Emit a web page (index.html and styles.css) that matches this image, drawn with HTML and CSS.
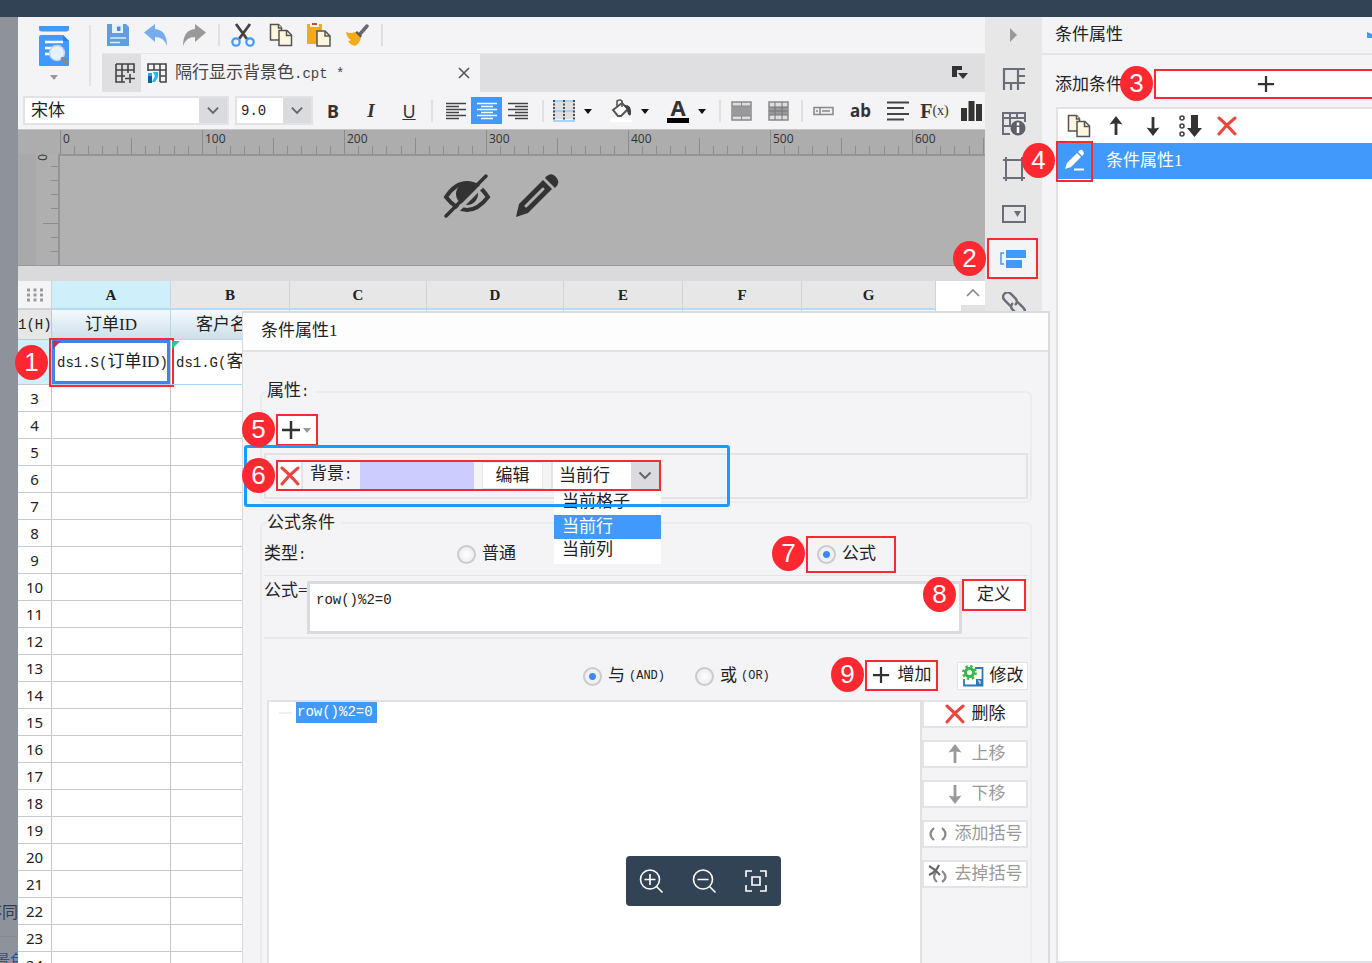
FILE: index.html
```html
<!DOCTYPE html>
<html lang="zh-CN">
<head>
<meta charset="utf-8">
<title>条件属性</title>
<link rel="stylesheet" href="styles.css">
</head>
<body>
<svg class="defs" aria-hidden="true">
  <symbol id="copy" viewBox="0 0 24 24"><path d="M1.500 1.500h8l3 3v12.500h-11z" fill="#fff6e0" stroke="#555" stroke-width="1.500"/><path d="M9.500 1.500v3.500h3.500M10 7.500h8l4.500 4.500v10.500h-12.500z" fill="#fff6e0" stroke="#555" stroke-width="1.500"/><path d="M17.500 7.500v5h5" fill="none" stroke="#555" stroke-width="1.500"/></symbol>
  <symbol id="cross" viewBox="0 0 20 20"><path d="M2 2Q9 8 18 18M18 2Q9 9 2 18" fill="none" stroke="#e8463e" stroke-width="3" stroke-linecap="round"/></symbol>
  <symbol id="plus" viewBox="0 0 20 20"><path d="M10 1v18M1 10h18" stroke="#333" stroke-width="2.500"/></symbol>
  <symbol id="up" viewBox="0 0 20 20"><path d="M10 19V5" stroke="currentColor" stroke-width="2.800"/><path d="M10 0l6.500 8.500q-6.500-2-13 0z" fill="currentColor"/></symbol>
  <symbol id="down" viewBox="0 0 20 20"><path d="M10 1v14" stroke="currentColor" stroke-width="2.800"/><path d="M10 20l6.500-8.500q-6.500 2-13 0z" fill="currentColor"/></symbol>
  <symbol id="caret" viewBox="0 0 12 12"><path d="M2 4h8l-4 5z" fill="currentColor"/></symbol>
  <symbol id="chev" viewBox="0 0 14 14"><path d="M1.500 4l5.500 5.500 5.500-5.500" fill="none" stroke="#666" stroke-width="2"/></symbol>
</svg>

<header class="viewer-bar"></header>
<div class="page">
  <aside class="gutter"><span class="gutter-text">不同</span><a class="gutter-link" href="#">景色</a></aside>

  <main class="workspace">
    <div class="top">
      <button class="preview" aria-label="预览">
        <svg width="32" height="42" viewBox="0 0 32 42"><path d="M1 1h30v3q0 2.500-3 2.500h-24q-3 0-3-2.500z" fill="#419afb"/><path d="M3 10h22l6 6v24q0 1-1 1H2q-1 0-1-1V12q0-2 2-2z" fill="#419afb"/><path d="M25 10l6 6h-6z" fill="#2d7fe0"/><path d="M7 17h18M7 23h8M7 29h6" stroke="#fff" stroke-width="2.500"/><circle cx="19" cy="28" r="7.500" fill="#e6f1fb" stroke="#c5d3df" stroke-width="1.500"/><path d="M24.500 33.500l4.500 4.500" stroke="#888" stroke-width="3.500" stroke-linecap="round"/></svg>
        <svg class="grey" width="12" height="12"><use href="#caret"/></svg>
      </button>
      <div class="top-right">
        <div class="quick">
          <button aria-label="保存"><svg width="24" height="24" viewBox="0 0 24 24"><path d="M1 1h19l3 3v19H1z" fill="#5f9fe0"/><path d="M6 1h11v9H6z" fill="#e8f2fc"/><path d="M11 3.500h3.500v4.500H11z" fill="#4a8ed6"/><path d="M4 15h16M4 19.500h10" stroke="#dcebfa" stroke-width="1.500"/></svg></button>
          <button aria-label="撤销"><svg width="24" height="24" viewBox="0 0 24 24"><path d="M0 9.500L11 1v5q12 1 12 17-3-9-12-9v5z" fill="#75aeee"/></svg></button>
          <button aria-label="重做"><svg width="24" height="24" viewBox="0 0 24 24"><path d="M24 9.500L13 1v5Q1 7 1 23q3-9 12-9v5z" fill="#999"/></svg></button>
          <i class="sep"></i>
          <button aria-label="剪切"><svg width="24" height="24" viewBox="0 0 24 24"><path d="M5 1l11 15M19 1L8 16" stroke="#444" stroke-width="2.800"/><circle cx="5" cy="19" r="3.700" fill="none" stroke="#419afb" stroke-width="2.200"/><circle cx="19" cy="19" r="3.700" fill="none" stroke="#419afb" stroke-width="2.200"/></svg></button>
          <button aria-label="复制"><svg width="24" height="24"><use href="#copy"/></svg></button>
          <button aria-label="粘贴"><svg width="24" height="24" viewBox="0 0 24 24"><path d="M0 1h15v20H0z" fill="#f3ac18"/><path d="M3 0h9v4H3z" fill="#f4f4f7"/><path d="M5 0h5v2H5z" fill="#c05030"/><path d="M10 8h8l5 5v10H10z" fill="#fff6e0" stroke="#555" stroke-width="1.500"/><path d="M18 8v5h5" fill="none" stroke="#555" stroke-width="1.500"/></svg></button>
          <button aria-label="格式刷"><svg width="24" height="24" viewBox="0 0 24 24"><path d="M15 11l7-8" stroke="#666a72" stroke-width="3.500" stroke-linecap="round"/><path d="M12 8l5 5-2 2-5-5z" fill="#555"/><path d="M1 9q5 2 9 0l6 6q-1 5-6 8-5-1-7-5 2 0 3-1Q2 15 1 9z" fill="#f3ac18"/></svg></button>
          <i class="sep"></i>
        </div>
        <div class="tabs">
          <button class="new-tab" aria-label="新建"><svg width="20" height="20" viewBox="0 0 20 20"><path d="M1 1h18v9M1 1v18h9M1 7h18M1 13h9M7 1v18M13 1v9M15 11v9M10 15.500h10" fill="none" stroke="#444" stroke-width="1.600"/></svg></button>
          <div class="tab">
            <svg width="20" height="20" viewBox="0 0 20 20"><path d="M1 8V1h18v18h-6M1 7h18M13 13h6M7 1v6M13 1v18" fill="none" stroke="#444" stroke-width="1.600"/><path d="M1 10h4v4H1z" fill="#29a9e8"/><path d="M1 13h4v7H1z" fill="#1459a8"/><path d="M6 9h5v5l-3 5H5l3-6z" fill="#29b4ee"/></svg>
            <span class="tab-name">隔行显示背景色<span class="mono">.cpt *</span></span>
            <button aria-label="关闭"><svg width="12" height="12" viewBox="0 0 12 12"><path d="M1 1l10 10M11 1L1 11" stroke="#555" stroke-width="1.600"/></svg></button>
          </div>
          <button class="tab-list" aria-label="标签列表"><svg width="18" height="16" viewBox="0 0 18 16"><path d="M1 1h10v4H6v7H1z" fill="#333"/><path d="M7 8h10l-5 6z" fill="#333"/></svg></button>
        </div>
      </div>
    </div>

    <div class="format">
      <div class="combo font"><select aria-label="字体"><option>宋体</option></select><svg width="14" height="14"><use href="#chev"/></svg></div>
      <div class="combo size"><select class="mono" aria-label="字号"><option>9.0</option></select><svg width="14" height="14"><use href="#chev"/></svg></div>
      <div class="group biu"><button class="b">B</button><button class="i">I</button><button class="u">U</button></div>
      <i class="sep"></i>
      <div class="group align">
        <button aria-label="左对齐"><svg width="20" height="18" viewBox="0 0 20 18"><path d="M0 1.500h20M0 4.500h13M0 7.500h20M0 10.500h13M0 13.500h20M0 16.500h13" stroke="#444" stroke-width="1.500"/></svg></button>
        <button class="on" aria-label="居中"><svg width="20" height="18" viewBox="0 0 20 18"><path d="M0 1.500h20M4 4.500h12M0 7.500h20M4 10.500h12M0 13.500h20M4 16.500h12" stroke="#fff" stroke-width="1.500"/></svg></button>
        <button aria-label="右对齐"><svg width="20" height="18" viewBox="0 0 20 18"><path d="M0 1.500h20M7 4.500h13M0 7.500h20M7 10.500h13M0 13.500h20M7 16.500h13" stroke="#444" stroke-width="1.500"/></svg></button>
      </div>
      <i class="sep"></i>
      <div class="group wide">
        <button aria-label="边框"><svg width="22" height="24" viewBox="0 0 22 24"><path d="M0 2h22v18H0z" fill="#dfe0e2"/><path d="M0 2h22M0 12h22M0 22h22" stroke="#a9d2fa" stroke-width="2"/><path d="M1 1v20M11 1v20M21 1v20" stroke="#222" stroke-width="1.500" stroke-dasharray="2 1.500"/></svg><svg width="12" height="12"><use href="#caret"/></svg></button>
        <button aria-label="填充"><svg width="22" height="24" viewBox="0 0 22 24"><path d="M3 11l9-7 6 6-7 7H8z" fill="#fff" stroke="#555" stroke-width="2"/><path d="M7 8V2q3-2 5 0v6" fill="none" stroke="#555" stroke-width="1.600"/><path d="M14 6q8-1 7 9-1 3-3 0-1-5-4-9z" fill="#444"/><path d="M0 19h22v4H0z" fill="#fff"/></svg><svg width="12" height="12"><use href="#caret"/></svg></button>
        <button class="color" aria-label="字体颜色"><span>A</span><svg width="12" height="12"><use href="#caret"/></svg></button>
      </div>
      <i class="sep"></i>
      <div class="group tools">
        <button aria-label="合并"><svg width="21" height="20" viewBox="0 0 21 20"><path d="M1 1h19v18H1z" fill="#ddd" stroke="#888" stroke-width="1.500"/><path d="M2 5h17v10H2z" fill="#999"/><path d="M10.500 1v4M10.500 15v4M1 5h19M1 15h19" stroke="#888"/></svg></button>
        <button aria-label="取消合并"><svg width="21" height="20" viewBox="0 0 21 20"><path d="M1 1h19v18H1z" fill="#ddd" stroke="#888" stroke-width="1.500"/><path d="M1 6h19v8H1z" fill="#999"/><path d="M7 1v18M14 1v18M1 6h19M1 10h19M1 14h19" stroke="#777"/></svg></button>
      </div>
      <i class="sep"></i>
      <div class="group tools">
        <button aria-label="控件"><svg width="21" height="10" viewBox="0 0 21 10"><path d="M1 1.500h19v7H1zM7 1.500v7" fill="#eee" stroke="#888" stroke-width="1.500"/><path d="M3 5h2M9 5h8" stroke="#888" stroke-width="1.500"/></svg></button>
        <button class="ab">ab</button>
        <button aria-label="段落"><svg width="24" height="20" viewBox="0 0 24 20"><path d="M1 1.500h22M1 7h17M1 13h22M1 18.500h17" stroke="#444" stroke-width="2"/></svg></button>
        <button class="fx">F<small>(x)</small></button>
        <button aria-label="图表"><svg width="21" height="20" viewBox="0 0 21 20"><path d="M0 7h6v13H0zM7.500 0h6v20h-6zM15 3h6v17h-6z" fill="#333"/></svg></button>
      </div>
    </div>

    <div class="ruler">
      <svg class="ticks" width="100%" height="25"><defs><pattern id="t" width="142" height="25" patternUnits="userSpaceOnUse"><path d="M.5 0v25M71.500 8v17M14.500 16v9M28.500 16v9M42.500 16v9M57.500 16v9M85.500 16v9M99.500 16v9M114.500 16v9M128.500 16v9" stroke="#8c8c8c"/></pattern></defs><rect width="100%" height="25" fill="url(#t)"/></svg>
      <div class="marks"><span>0</span><span>100</span><span>200</span><span>300</span><span>400</span><span>500</span><span>600</span></div>
    </div>
    <div class="canvas">
      <div class="vruler"><span>0</span><svg width="16" height="110" viewBox="0 0 16 110"><path d="M9 12.500h7M9 26.500h7M9 40.500h7M9 54.500h7M1 69.500h15M9 83.500h7M9 97.500h7" stroke="#8c8c8c"/></svg></div>
      <div class="stage">
        <svg width="48" height="46" viewBox="0 0 48 46"><path d="M3 24Q12 10 24 10T45 24Q35 37 24 37T3 24z" fill="none" stroke="#333" stroke-width="4"/><circle cx="24" cy="21" r="11" fill="#333"/><path d="M6 46L48 4" stroke="#b1b1b1" stroke-width="4"/><path d="M3 43L43 3" stroke="#333" stroke-width="3.500" stroke-linecap="round"/></svg>
        <svg width="44" height="46" viewBox="0 0 44 46"><path d="M1 44l3-13L28 7l9 9-24 24z" fill="#333"/><path d="M11 33L28 16" stroke="#b1b1b1" stroke-width="3" stroke-linecap="round"/><path d="M30 5q6-7 11-1t-1 11z" fill="#333"/></svg>
      </div>
    </div>

    <div class="sheet">
      <table>
        <colgroup><col class="c-head"><col class="c-a"><col class="c-a"><col class="c-c"><col class="c-c"><col class="c-a"><col class="c-a"><col class="c-g"></colgroup>
        <thead><tr><th class="corner"><svg width="16" height="14" viewBox="0 0 16 14"><path d="M0 2h16M0 7h16M0 12h16" stroke="#999" stroke-width="3" stroke-dasharray="3 3.500"/></svg></th><th class="sel">A</th><th>B</th><th>C</th><th>D</th><th>E</th><th>F</th><th>G</th></tr></thead>
        <tbody>
          <tr class="title"><th>1(H)</th><td>订单ID</td><td>客户名称</td><td></td><td></td><td></td><td></td><td></td></tr>
          <tr class="data"><th></th><td class="active"><span class="tri"></span><span class="mono">ds1.S(</span>订单ID<span class="mono">)</span><div class="frame"><b class="badge">1</b></div></td><td><span class="tri green"></span><span class="mono">ds1.G(</span>客户</td><td></td><td></td><td></td><td></td><td></td></tr>
          <tr><th>3</th><td></td><td></td><td></td><td></td><td></td><td></td><td></td></tr>
          <tr><th>4</th><td></td><td></td><td></td><td></td><td></td><td></td><td></td></tr>
          <tr><th>5</th><td></td><td></td><td></td><td></td><td></td><td></td><td></td></tr>
          <tr><th>6</th><td></td><td></td><td></td><td></td><td></td><td></td><td></td></tr>
          <tr><th>7</th><td></td><td></td><td></td><td></td><td></td><td></td><td></td></tr>
          <tr><th>8</th><td></td><td></td><td></td><td></td><td></td><td></td><td></td></tr>
          <tr><th>9</th><td></td><td></td><td></td><td></td><td></td><td></td><td></td></tr>
          <tr><th>10</th><td></td><td></td><td></td><td></td><td></td><td></td><td></td></tr>
          <tr><th>11</th><td></td><td></td><td></td><td></td><td></td><td></td><td></td></tr>
          <tr><th>12</th><td></td><td></td><td></td><td></td><td></td><td></td><td></td></tr>
          <tr><th>13</th><td></td><td></td><td></td><td></td><td></td><td></td><td></td></tr>
          <tr><th>14</th><td></td><td></td><td></td><td></td><td></td><td></td><td></td></tr>
          <tr><th>15</th><td></td><td></td><td></td><td></td><td></td><td></td><td></td></tr>
          <tr><th>16</th><td></td><td></td><td></td><td></td><td></td><td></td><td></td></tr>
          <tr><th>17</th><td></td><td></td><td></td><td></td><td></td><td></td><td></td></tr>
          <tr><th>18</th><td></td><td></td><td></td><td></td><td></td><td></td><td></td></tr>
          <tr><th>19</th><td></td><td></td><td></td><td></td><td></td><td></td><td></td></tr>
          <tr><th>20</th><td></td><td></td><td></td><td></td><td></td><td></td><td></td></tr>
          <tr><th>21</th><td></td><td></td><td></td><td></td><td></td><td></td><td></td></tr>
          <tr><th>22</th><td></td><td></td><td></td><td></td><td></td><td></td><td></td></tr>
          <tr><th>23</th><td></td><td></td><td></td><td></td><td></td><td></td><td></td></tr>
          <tr><th>24</th><td></td><td></td><td></td><td></td><td></td><td></td><td></td></tr>
        </tbody>
      </table>
      <div class="scroll"><button aria-label="向上滚动"><svg width="14" height="10" viewBox="0 0 14 10"><path d="M1 8l6-6 6 6" fill="none" stroke="#888" stroke-width="1.600"/></svg></button></div>
    </div>
  </main>

  <nav class="side">
    <button class="first" aria-label="收起"><svg width="10" height="14" viewBox="0 0 10 14"><path d="M1 0l7 7-7 7z" fill="#999"/></svg></button>
    <button aria-label="单元格元素"><svg width="24" height="24" viewBox="0 0 24 24"><path d="M2 23V2h21M16 2v14M2 16h21M16 9h7M9 16v7M16 16v7" fill="none" stroke="#6b6d78" stroke-width="2.200"/></svg></button>
    <button aria-label="单元格属性"><svg width="24" height="24" viewBox="0 0 24 24"><path d="M8 22H1V1h22v9M1 6h22M1 14h8M8 1v13M15 1v6" fill="none" stroke="#6b6d78" stroke-width="2"/><circle cx="16" cy="16" r="7.500" fill="#5d606b"/><path d="M16 10.500v3M16 15v6" stroke="#fff" stroke-width="2.500"/></svg></button>
    <button aria-label="悬浮元素"><svg width="24" height="24" viewBox="0 0 24 24"><path d="M4 0v24M20 0v24M1 3h22M1 21h22" stroke="#6b6d78" stroke-width="2"/></svg></button>
    <button aria-label="控件设置"><svg width="24" height="20" viewBox="0 0 24 20"><path d="M1 2h22v16H1z" fill="none" stroke="#6b6d78" stroke-width="2"/><path d="M12 7h7l-3.500 6z" fill="#6b6d78"/></svg></button>
    <button aria-label="条件属性"><span class="pick red"><svg width="28" height="20" viewBox="0 0 28 20"><path d="M5 4H2v11h3" fill="none" stroke="#419afb" stroke-width="1.500"/><path d="M7 1h20v8H7zM7 11h16v8H7z" fill="#419afb"/></svg><b class="badge">2</b></span></button>
    <button aria-label="超级链接"><svg width="24" height="24" viewBox="0 0 24 24"><g transform="rotate(45 12 12)" fill="none" stroke="#6b6d78" stroke-width="2.400" stroke-linecap="round"><path d="M10 16H3q-5 0-5-4.500T3 7h6q4 0 4.500 4"/><path d="M14 8h7q5 0 5 4.500T21 17h-6q-4 0-4.500-4"/></g></svg></button>
  </nav>

  <section class="panel">
    <header><h2>条件属性</h2><svg width="6" height="8" viewBox="0 0 6 8"><path d="M1 1v6h5V3z" fill="#419afb"/></svg></header>
    <div class="add"><span>添加条件</span><button class="red" aria-label="添加条件"><svg width="18" height="18"><use href="#plus"/></svg><b class="badge">3</b></button></div>
    <div class="list">
      <div class="list-tools">
        <button aria-label="复制"><svg width="24" height="24"><use href="#copy"/></svg></button>
        <button aria-label="上移"><svg width="20" height="20"><use href="#up"/></svg></button>
        <button aria-label="下移"><svg width="20" height="20"><use href="#down"/></svg></button>
        <button aria-label="排序"><svg width="24" height="24" viewBox="0 0 24 24"><g fill="none" stroke="#444" stroke-width="1.600"><circle cx="4" cy="4" r="2"/><circle cx="4" cy="12" r="2"/><circle cx="4" cy="20" r="2"/></g><path d="M13 1h7v13h4l-7.500 9L9 14h4z" fill="#333"/></svg></button>
        <button aria-label="删除"><svg width="20" height="20"><use href="#cross"/></svg></button>
      </div>
      <div class="list-row"><button class="red" aria-label="编辑"><svg width="22" height="24" viewBox="0 0 22 24"><path d="M1 20l2-6L13 4l4 4L7 18z" fill="#fff"/><path d="M14 3q3-4 5-1t-1 5z" fill="#fff"/><path d="M10 20.500h10" stroke="#fff" stroke-width="2"/></svg><b class="badge">4</b></button><span>条件属性1</span></div>
    </div>
  </section>

  <section class="dialog" role="dialog" aria-labelledby="dlg">
    <header><h1 id="dlg">条件属性1</h1></header>
    <div class="dialog-body">
      <fieldset class="attrs">
        <legend>属性<span class="mono">:</span></legend>
        <button class="add-attr red" aria-label="添加属性"><svg width="20" height="20"><use href="#plus"/></svg><svg class="grey" width="12" height="12"><use href="#caret"/></svg><b class="badge">5</b></button>
        <div class="attr-box">
          <div class="attr-row red">
            <button class="del" aria-label="删除"><svg width="20" height="20"><use href="#cross"/></svg></button>
            <span class="attr-label">背景<span class="mono">:</span></span>
            <span class="swatch"></span>
            <button class="edit">编辑</button>
            <div class="combo scope"><select aria-label="范围"><option>当前行</option></select><svg width="14" height="14"><use href="#chev"/></svg></div>
            <ul class="options" role="listbox"><li role="option">当前格子</li><li class="chosen" role="option" aria-selected="true">当前行</li><li role="option">当前列</li></ul>
            <b class="badge">6</b>
          </div>
        </div>
        <div class="highlight"></div>
      </fieldset>

      <fieldset class="conds">
        <legend>公式条件</legend>
        <div class="type-row">
          <span class="type-label">类型<span class="mono">:</span></span>
          <label class="normal"><input type="radio" name="type">普通</label>
          <label class="formula red"><input type="radio" name="type" checked>公式<b class="badge">7</b></label>
        </div>
        <div class="formula-row">
          <label for="fx">公式=</label>
          <textarea id="fx" class="mono">row()%2=0</textarea>
          <button class="define red">定义<b class="badge far">8</b></button>
        </div>
        <div class="join-row">
          <label><input type="radio" name="join" checked>与<span class="mono-s">(AND)</span></label>
          <label><input type="radio" name="join">或<span class="mono-s">(OR)</span></label>
          <button class="plus red"><svg width="18" height="18"><use href="#plus"/></svg>增加<b class="badge">9</b></button>
          <button class="modify"><svg width="22" height="22" viewBox="0 0 22 22"><path d="M13 3h7.500v17.500H2V14" fill="none" stroke="#2e78b8" stroke-width="1.800"/><path d="M14 14h7v7h-7z" fill="#2e78b8"/><path d="M16 16h2v3" stroke="#fff" fill="none"/><circle cx="7.500" cy="7.500" r="4" fill="#fff" stroke="#35b84b" stroke-width="3"/><circle cx="7.500" cy="7.500" r="6.200" fill="none" stroke="#35b84b" stroke-width="2.500" stroke-dasharray="2.400 2.470"/></svg>修改</button>
        </div>
        <div class="tree-row">
          <div class="tree"><i></i><span class="mono">row()%2=0</span></div>
          <div class="actions">
            <button><svg width="20" height="20"><use href="#cross"/></svg>删除</button>
            <button disabled><svg width="20" height="20"><use href="#up"/></svg>上移</button>
            <button disabled><svg width="20" height="20"><use href="#down"/></svg>下移</button>
            <button disabled><svg width="20" height="20" viewBox="0 0 20 20"><path d="M6 4Q-1 10 6 16M14 4q7 6 0 12" fill="none" stroke="#888" stroke-width="2.200"/></svg>添加括号</button>
            <button disabled><svg width="20" height="20" viewBox="0 0 20 20"><path d="M9 7q-6 6 0 11M14 7q7 6 0 11" fill="none" stroke="#888" stroke-width="2.200"/><path d="M1 2q6 3 11 9M11 1Q8 8 1 11" fill="none" stroke="#666" stroke-width="2"/></svg>去掉括号</button>
          </div>
        </div>
      </fieldset>
    </div>
  </section>
</div>

<div class="zoombar">
  <button aria-label="放大"><svg width="26" height="26" viewBox="0 0 26 26"><path d="M18.500 18.500l6 6M6.500 11.500h11M12 6v11" /><circle cx="12" cy="11.500" r="9.500"/></svg></button>
  <button aria-label="缩小"><svg width="26" height="26" viewBox="0 0 26 26"><path d="M18.500 18.500l6 6M6.500 11.500h11"/><circle cx="12" cy="11.500" r="9.500"/></svg></button>
  <button aria-label="适应屏幕"><svg width="26" height="26" viewBox="0 0 26 26"><path d="M3 9V3h6M17 3h6v6M23 17v6h-6M9 23H3v-6M9 9h8v8H9z"/></svg></button>
</div>
</body>
</html>
```

FILE: styles.css
```css
* { box-sizing: border-box; }
html, body { height: 100%; margin: 0; overflow: hidden; }
body {
  display: flex;
  flex-direction: column;
  background: #f4f4f7;
  color: #222;
  font: 17px/20px "Liberation Serif", "Noto Sans CJK SC", sans-serif;
}
button, select, textarea, input { font: inherit; color: inherit; margin: 0; padding: 0; border: 0; background: none; border-radius: 0; }
button { display: flex; align-items: center; justify-content: center; }
svg { flex: none; display: block; }
h1, h2 { margin: 0; font-size: 17px; line-height: 20px; font-weight: 400; }
.defs { position: absolute; width: 0; height: 0; }
.mono { font-family: "Liberation Mono", "Noto Sans CJK SC", monospace; font-size: 14px; }
.mono-s { font-family: "Liberation Mono", monospace; font-size: 12px; }
.grey { color: #999; }

/* numbered callouts */
.red { position: relative; border: 2px solid #fe2830; }
.badge {
  position: absolute;
  z-index: 5;
  right: 100%;
  top: 50%;
  width: 33px;
  height: 35px;
  margin: -18px 3px 0 0;
  border-radius: 50%;
  background: #fe2830;
  color: #fff;
  font: 26px/35px "Liberation Sans", sans-serif;
  text-align: center;
}
.badge.far { margin-right: 8px; }

.viewer-bar { flex: none; height: 17px; background: #334356; }
.page { position: relative; flex: 1; min-height: 0; display: flex; }

.gutter {
  flex: none;
  width: 18px;
  display: flex;
  flex-direction: column;
  justify-content: flex-end;
  align-items: flex-end;
  overflow: hidden;
  background: #8e929b;
  font-size: 16px;
  white-space: nowrap;
}
.gutter-text { padding-bottom: 13px; border-bottom: 1px solid #858a93; color: #333b4a; }
.gutter-link { margin: 14px -8px -8px 0; color: #175a9e; text-decoration: none; }

.workspace { flex: 1; min-width: 0; display: flex; flex-direction: column; }
.top { flex: none; display: flex; height: 75px; }
.preview { flex: none; width: 73px; margin: 8px 0 6px; border-right: 2px solid #e2e2e5; flex-direction: column; gap: 4px; justify-content: flex-start; }
.top-right { flex: 1; min-width: 0; display: flex; flex-direction: column; }
.quick { display: flex; align-items: center; height: 36px; padding-left: 8px; }
.quick button { width: 38px; }
.sep { flex: none; width: 2px; height: 22px; background: #e0e0e3; }
.quick .sep { margin: 0 4px 0 5px; }
.tabs { flex: 1; display: flex; margin-left: 11px; background: #dfdfe1; border-top: 1px solid #e6e6e9; }
.new-tab { width: 39px; padding-left: 6px; }
.tab { display: flex; align-items: center; gap: 8px; width: 339px; padding: 0 10px 0 6px; background: #f4f4f7; color: #444; }
.tab-name { flex: 1; white-space: pre; }
.tab-list { margin-left: auto; width: 50px; }

.format { flex: none; display: flex; align-items: center; height: 37px; padding-left: 5px; }
.format > * { flex: none; }
.combo { position: relative; display: flex; height: 29px; border: 2px solid #e2e3e6; background: #fff; }
.combo select { flex: 1; min-width: 0; appearance: none; padding-left: 6px; margin-right: 27px; outline: 0; }
.combo svg { position: absolute; right: 0; top: 0; width: 28px; height: 100%; padding: 6px 7px; background: #dadbde; pointer-events: none; }
.combo.font { width: 206px; margin-right: 6px; }
.combo.size { width: 78px; margin-right: 1px; }
.combo.size select { padding-left: 4px; }
.group { display: flex; align-items: center; }
.biu { margin-right: 3px; }
.biu button { width: 38px; font: 18px/24px "Noto Sans", sans-serif; color: #333; }
.biu .b { font-weight: 700; }
.biu .i { font-family: "Liberation Serif", serif; font-style: italic; font-weight: 700; font-size: 19px; }
.biu .u { text-decoration: underline; }
.align { margin: 0 9px 0 7px; }
.align button { width: 31px; height: 27px; }
.align .on { background: #419afb; }
.wide { gap: 16px; margin: 0 11px 0 9px; }
.wide button { width: 41px; gap: 7px; color: #111; }
.color span { width: 23px; height: 25px; border-bottom: 5px solid #000; font: bold 22px/18px "Noto Sans", sans-serif; color: #333; text-align: center; }
.tools { gap: 16px; margin: 0 12px 0 10px; }
.tools + .sep + .tools { margin-right: 0; }
.tools button { width: 21px; height: 24px; color: #333; }
.tools .ab { font: bold 17px/24px "Noto Sans", sans-serif; }
.tools .fx { font: bold 20px/24px "Liberation Serif", serif; }
.fx small { font-size: 14px; font-weight: 400; }

.ruler { position: relative; flex: none; height: 25px; padding-left: 42px; background: #adadad; border-top: 1px solid #c4c4c4; overflow: hidden; }
.marks { position: absolute; left: 42px; top: 0; display: flex; }
.marks span { width: 142px; flex: none; padding-left: 3px; font: 12px/18px "Open Sans", sans-serif; color: #333; }
.canvas { flex: none; display: flex; height: 112px; background: #b1b1b1; border-bottom: 1px solid #999; }
.vruler { display: flex; justify-content: space-between; width: 42px; padding-left: 18px; background: linear-gradient(90deg, #a9a9a9 18px, #afafaf 18px); border-right: 2px solid #949494; }
.vruler span { flex: none; height: 12px; width: 12px; margin-right: -6px; font: 12px/12px "Open Sans", sans-serif; writing-mode: vertical-rl; color: #333; }
.stage { flex: 1; display: flex; justify-content: center; gap: 24px; padding: 17px 43px 0 0; border-top: 2px solid #949494; }

.sheet { flex: 1; min-height: 0; display: flex; border-top: 15px solid #dadadc; background: #fff; }
table { flex: none; width: 918px; height: min-content; table-layout: fixed; border-collapse: separate; border-spacing: 0; }
.c-head { width: 34px; }
.c-a { width: 119px; }
.c-c { width: 137px; }
.c-g { width: 134px; }
th, td { height: 27px; padding: 0; border-right: 1px solid #c6c6c6; border-bottom: 1px solid #c9c9cb; text-align: center; white-space: nowrap; font-weight: 400; }
tbody th { font: 15px/20px "Noto Sans", sans-serif; color: #222; }
thead th { height: 29px; background: #e7e7e7; border-color: #d2d3d5; border-bottom: 2px solid #b5daf8; font: bold 15px/20px "Liberation Serif", serif; }
thead .sel { background: #cfeffb; }
thead .corner { background: #f4f4f7; border-bottom-color: #d2d3d5; }
.corner svg { margin: 0 auto; }
.title th { height: 30px; background: #e7e7e7; font: 14px/20px "Liberation Mono", monospace; }
.title td { background: linear-gradient(#f4faff, #cddfe8); border-color: #b5d6ef; overflow: hidden; }
.data th { height: 45px; background: #cfeffb; }
.data td { position: relative; padding-left: 5px; text-align: left; border-bottom-color: #a9d2fa; }
.data .active { box-shadow: inset 0 0 0 3px #3c84ee; }
.tri { position: absolute; left: 1px; top: 1px; border: 4px solid; border-color: #c03050 transparent transparent #c03050; }
.tri.green { border-color: #20c8a0 transparent transparent #20c8a0; }
.frame { position: absolute; inset: -2px -4px -3px -3px; border: 2px solid #fe2830; }
.scroll { margin-left: auto; width: 24px; background: #e2e2e3; }
.scroll button { width: 24px; height: 24px; background: #fff; }

.side { flex: none; width: 57px; background: #e7e7e7; display: flex; flex-direction: column; }
.side button { flex: none; height: 45px; }
.side .first { height: 39px; padding-bottom: 4px; }
.pick { display: flex; align-items: center; justify-content: center; width: 51px; height: 41px; margin-right: 2px; background: #f4f4f7; }

.panel { flex: none; width: 330px; display: flex; flex-direction: column; }
.panel header { display: flex; align-items: center; justify-content: space-between; height: 38px; padding-left: 13px; border-bottom: 2px solid #e4e4e7; }
.add { display: flex; align-items: center; height: 52px; padding: 7px 0 0 13px; margin-right: -6px; }
.add span { width: 99px; }
.add button { flex: 1; height: 30px; margin-bottom: 1px; background: #fff; }
.list { flex: 1; margin-left: 14px; border: 2px solid #e2e3e6; border-right: 0; background: #fff; }
.list-tools { display: flex; align-items: center; height: 34px; padding-left: 2px; color: #333; }
.list-tools button { width: 37px; }
.list-row { display: flex; align-items: center; gap: 13px; height: 36px; background: #419afb; color: #fff; }
.list-row button { width: 37px; height: 41px; margin-left: -2px; }

.dialog { position: absolute; z-index: 3; left: 242px; top: 294px; bottom: 0; width: 808px; display: flex; flex-direction: column; background: #f4f4f7; border: 2px solid #dadbde; border-bottom: 0; border-left-width: 1px; }
.dialog header { flex: none; height: 39px; padding: 8px 18px; background: #fdfdfd; border-bottom: 2px solid #e0e1e4; }
.dialog-body { flex: 1; min-height: 0; display: flex; flex-direction: column; gap: 10px; padding: 29px 16px 0 17px; }
fieldset { min-width: 0; margin: 0; padding: 0 2px; border: 2px solid #ececef; border-radius: 6px; }
legend { padding: 0 6px 0 0; margin-left: 3px; line-height: 20px; }
.attrs { position: relative; height: 122px; }
.add-attr { width: 42px; height: 32px; margin: 12px 0 7px 12px; background: #fff; }
.attr-box { height: 46px; padding: 5px 10px; border: 2px solid #e2e3e6; }
.attr-row { display: flex; height: 31px; width: 385px; }
.del { width: 25px; background: #fff; border-right: 2px solid #e2e3e6; }
.attr-label { width: 57px; padding: 2px 0 0 7px; }
.swatch { width: 114px; background: #ccccfe; }
.edit { width: 61px; margin: 0 8px; background: #fff; border: 1px solid #e8e8eb; }
.combo.scope { flex: 1; height: 27px; border-width: 0 0 0 2px; }
.scope select { margin-right: 25px; }
.options { position: absolute; z-index: 2; right: -2px; top: 29px; width: 107px; margin: 0; padding: 0 0 1px; list-style: none; background: #fff; }
.options li { height: 24px; padding-left: 8px; line-height: 22px; }
.options .chosen { background: #419afb; color: #fff; line-height: 24px; }
.highlight { position: absolute; z-index: 4; left: -18px; top: 43px; width: 486px; height: 62px; border: 3px solid #1b9aff; border-radius: 3px; pointer-events: none; }
.conds { flex: 1; min-height: 0; display: flex; flex-direction: column; border-bottom: 0; border-radius: 6px 6px 0 0; overflow: visible; }
.type-row { display: flex; align-items: center; height: 43px; border-bottom: 1px solid #e4e4e7; }
.type-label { width: 193px; }
label { display: flex; align-items: center; }
input[type="radio"] { appearance: none; flex: none; width: 19px; height: 19px; margin-right: 6px; border: 2px solid #cbcbce; border-radius: 50%; background: radial-gradient(circle, #fff, #e6e6e8); }
input[type="radio"]:checked { background: radial-gradient(circle, #3d87f2 3px, #f0f0f2 4px); }
.normal { width: 349px; }
.formula { width: 90px; height: 37px; padding-left: 9px; }
.formula-row { display: flex; align-items: flex-start; height: 63px; padding-top: 5px; border-bottom: 2px solid #e8e8eb; }
.formula-row label { width: 43px; white-space: nowrap; }
textarea { flex: 1; height: 53px; padding: 6px; border: 3px solid #dadbde; background: #fff; resize: none; line-height: 20px; overflow: hidden; outline: 0; }
.define { width: 64px; height: 32px; margin: -2px 2px 0 0; background: #fff; }
.join-row { display: flex; align-items: center; height: 61px; padding: 13px 0 0 319px; }
.join-row label { width: 112px; white-space: nowrap; }
.join-row .mono-s { margin-left: 4px; }
.join-row button { height: 31px; background: #fff; white-space: nowrap; }
.plus { width: 73px; margin: 0 19px 2px auto; gap: 8px; }
.join-row .modify { width: 71px; height: 28px; gap: 6px; border: 1px solid #e2e3e6; }
.join-row label + label { margin-right: 40px; }
.tree-row { flex: 1; min-height: 0; display: flex; gap: 0; padding-left: 3px; }
.tree { flex: 1; display: flex; align-items: flex-start; gap: 4px; padding-left: 10px; background: #fff; border: 2px solid #e0e1e4; border-bottom: 0; }
.tree i { width: 13px; height: 2px; margin-top: 10px; background: #f0f0f2; }
.tree span { padding: 0 4px 0 1px; height: 21px; background: #419afb; color: #fff; }
.actions { display: flex; flex-direction: column; gap: 12px; width: 106px; }
.actions button { flex: none; height: 28px; gap: 7px; background: #fff; border: 2px solid #e2e3e6; white-space: nowrap; }
.actions button:disabled { color: #999; }

.zoombar { position: fixed; z-index: 9; left: calc(50% - 60px); bottom: 57px; display: flex; align-items: center; justify-content: space-between; width: 155px; height: 50px; padding: 0 12px; border-radius: 4px; background: #334356; }
.zoombar svg { fill: none; stroke: #fff; stroke-width: 1.6px; }
```
